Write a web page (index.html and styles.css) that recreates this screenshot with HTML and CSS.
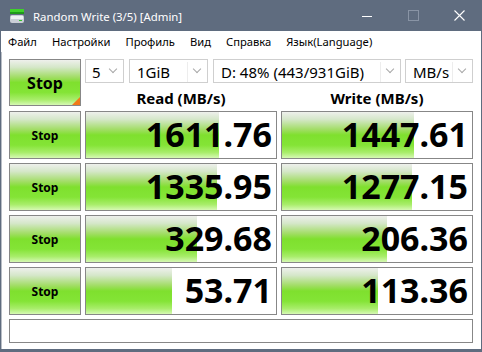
FILE: index.html
```html
<!DOCTYPE html>
<html lang="ru">
<head>
    <meta charset="UTF-8">
    <title>Random Write (3/5) [Admin]</title>
    <link rel="stylesheet" href="styles.css">
</head>
<body>
    <div class="window">
        <div class="titlebar">
            <svg class="app-icon" width="16" height="16" viewBox="0 0 16 16">
                <rect x="1" y="1" width="14" height="3" fill="#3fd12a"/>
                <rect x="1" y="4" width="14" height="2" fill="#1f9a1a"/>
                <rect x="1" y="7" width="14" height="8" rx="2" fill="#c9ced6"/>
                <rect x="2" y="8" width="12" height="3" fill="#eef0f3"/>
                <rect x="10" y="12" width="3" height="1" fill="#35c22a"/>
            </svg>
            <span class="title-text">Random Write (3/5) [Admin]</span>
            <div class="title-buttons">
                <div class="caption-btn">
                    <svg width="10" height="10" viewBox="0 0 10 10">
                        <line x1="0" y1="5.5" x2="10" y2="5.5" stroke="#ffffff" stroke-width="1"/>
                    </svg>
                </div>
                <div class="caption-btn">
                    <svg width="11" height="11" viewBox="0 0 11 11">
                        <rect x="0.5" y="0.5" width="10" height="10" fill="none" stroke="#8994a5" stroke-width="1"/>
                    </svg>
                </div>
                <div class="caption-btn">
                    <svg width="11" height="11" viewBox="0 0 11 11">
                        <path d="M0.5 0.5 L10.5 10.5 M10.5 0.5 L0.5 10.5" stroke="#fff" stroke-width="1.1"/>
                    </svg>
                </div>
            </div>
        </div>

        <div class="menubar">
            <span class="menu-item">Файл</span>
            <span class="menu-item">Настройки</span>
            <span class="menu-item">Профиль</span>
            <span class="menu-item">Вид</span>
            <span class="menu-item">Справка</span>
            <span class="menu-item">Язык(Language)</span>
        </div>

        <div class="client">
            <div class="grid">
                <button class="stop-btn stop-all">Stop</button>
                <div class="top-panel">
                    <div class="combos">
                        <div class="combo combo-count"><span class="combo-val">5</span><span class="chev"></span></div>
                        <div class="combo combo-size"><span class="combo-val">1GiB</span><span class="chev"></span></div>
                        <div class="combo combo-drive"><span class="combo-val">D: 48% (443/931GiB)</span><span class="chev"></span></div>
                        <div class="combo combo-unit"><span class="combo-val">MB/s</span><span class="chev"></span></div>
                    </div>
                    <div class="headers">
                        <div class="col-head">Read (MB/s)</div>
                        <div class="col-head">Write (MB/s)</div>
                    </div>
                </div>

                <button class="stop-btn">Stop</button>
                <div class="cell"><div class="fill" style="width:133px"></div><span class="value">1611.76</span></div>
                <div class="cell"><div class="fill" style="width:132px"></div><span class="value">1447.61</span></div>

                <button class="stop-btn">Stop</button>
                <div class="cell"><div class="fill" style="width:131px"></div><span class="value">1335.95</span></div>
                <div class="cell"><div class="fill" style="width:130px"></div><span class="value">1277.15</span></div>

                <button class="stop-btn">Stop</button>
                <div class="cell"><div class="fill" style="width:111px"></div><span class="value">329.68</span></div>
                <div class="cell"><div class="fill" style="width:105px"></div><span class="value">206.36</span></div>

                <button class="stop-btn">Stop</button>
                <div class="cell"><div class="fill" style="width:86px"></div><span class="value">53.71</span></div>
                <div class="cell"><div class="fill" style="width:96px"></div><span class="value">113.36</span></div>
            </div>
            <div class="status"></div>
        </div>
    </div>
</body>
</html>
```

FILE: styles.css
```css
body {
    margin: 0;
    font-family: "Noto Sans", "Open Sans", sans-serif;
    background-color: #5f6c7f;
}
.window {
    width: 482px;
    height: 352px;
    background-color: #5f6c7f;
    display: flex;
    flex-direction: column;
    overflow: hidden;
}
.titlebar {
    height: 31px;
    display: flex;
    align-items: center;
    color: #fff;
    flex-shrink: 0;
}
.app-icon {
    margin-left: 9px;
    margin-right: 8px;
}
.title-text {
    font-size: 11.4px;
    margin-top: 1px;
}
.title-buttons {
    margin-left: auto;
    display: flex;
    height: 31px;
}
.caption-btn {
    width: 46px;
    display: flex;
    align-items: center;
    justify-content: center;
}
.menubar {
    height: 21px;
    margin: 0 1px;
    background-color: #fff;
    display: flex;
    align-items: center;
    font-size: 11.2px;
    color: #000;
    padding-left: 7px;
    flex-shrink: 0;
}
.menu-item {
    margin-right: 15px;
}
.client {
    flex: 1;
    margin: 0 1px 3px 1px;
    background-color: #fff;
    border-left: 1px solid #b9bec6;
    padding: 7px 8px 0 7px;
}
.grid {
    display: grid;
    grid-template-columns: 72px 192px 192px;
    grid-auto-rows: 48px;
    gap: 4px;
}
.stop-btn {
    box-sizing: border-box;
    height: 48px;
    border: 1px solid #878787;
    padding: 0;
    font-family: inherit;
    font-weight: bold;
    font-size: 12px;
    color: #000;
    background: linear-gradient(#eef0ec 0%, #d5e7c9 16%, #a2dd66 38%, #7fe02e 50%, #84e436 72%, #a8ed6a 88%, #d6f9b4 100%);
}
.stop-all {
    position: relative;
    height: 47px;
    font-size: 16px;
}
.stop-all::after {
    content: "";
    position: absolute;
    right: 0;
    bottom: 0;
    border-left: 8px solid transparent;
    border-bottom: 8px solid #f27a18;
}
.top-panel {
    grid-column: 2 / 4;
}
.combos {
    display: flex;
    height: 24px;
}
.combo {
    box-sizing: border-box;
    height: 24px;
    border: 1px solid #cfcfcf;
    background-color: #fff;
    display: flex;
    align-items: center;
    font-size: 15px;
}
.combo-val {
    flex: 1;
    padding-left: 6px;
    line-height: 20px;
    margin-top: 1px;
    white-space: nowrap;
}
.chev {
    width: 5px;
    height: 5px;
    border-right: 1px solid #a8a8a8;
    border-bottom: 1px solid #a8a8a8;
    transform: rotate(45deg);
    margin: 0 7px 4px 6px;
}
.combo-count { width: 39px; margin-right: 5px; }
.combo-size { width: 79px; margin-right: 5px; }
.combo-drive { width: 188px; margin-right: 4px; }
.combo-unit { width: 68px; }
.combo-size .combo-val,
.combo-drive .combo-val,
.combo-unit .combo-val {
    border-right: 1px solid #ededed;
    padding-left: 7px;
}
.headers {
    display: grid;
    grid-template-columns: 192px 192px;
    gap: 4px;
}
.col-head {
    text-align: center;
    font-weight: bold;
    font-size: 15px;
    line-height: 20px;
    padding-top: 5px;
}
.cell {
    box-sizing: border-box;
    height: 48px;
    border: 1px solid #878787;
    background-color: #fff;
    display: grid;
    align-items: center;
}
.fill {
    grid-area: 1 / 1;
    height: 46px;
    background: linear-gradient(#eef0ec 0%, #d5e7c9 16%, #a2dd66 38%, #7fe02e 50%, #84e436 72%, #a8ed6a 88%, #d6f9b4 100%);
}
.value {
    grid-area: 1 / 1;
    justify-self: end;
    position: relative;
    font-size: 34px;
    font-weight: bold;
    line-height: 1;
    padding-right: 4px;
    margin-top: -2px;
    color: #000;
}
.status {
    box-sizing: border-box;
    height: 24px;
    margin-top: 4px;
    border: 1px solid #878787;
    background-color: #fff;
}
```
